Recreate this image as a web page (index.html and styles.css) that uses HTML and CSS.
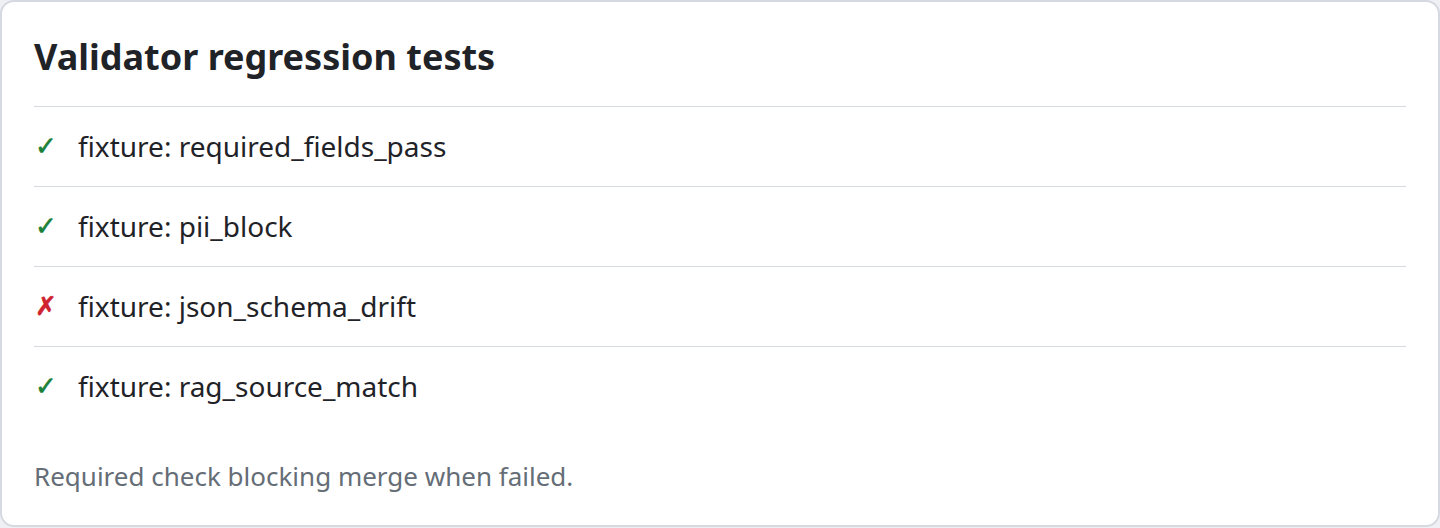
FILE: index.html
```html
<!DOCTYPE html>
<html lang="en">
<head>
    <meta charset="UTF-8">
    <meta name="viewport" content="width=device-width, initial-scale=1.0">
    <title>Validator regression tests</title>
    <link rel="stylesheet" href="styles.css">
</head>
<body>
    <div class="card">
        <h2 class="card-title">Validator regression tests</h2>
        <ul class="tests">
            <li class="test"><span class="mark pass">✓</span><span class="name">fixture: required_fields_pass</span></li>
            <li class="test"><span class="mark pass">✓</span><span class="name">fixture: pii_block</span></li>
            <li class="test"><span class="mark fail">✗</span><span class="name">fixture: json_schema_drift</span></li>
            <li class="test"><span class="mark pass">✓</span><span class="name">fixture: rag_source_match</span></li>
        </ul>
        <p class="footnote">Required check blocking merge when failed.</p>
    </div>
</body>
</html>
```
FILE: styles.css
```css
:root {
    --text-color: #1f2328;
    --muted-color: #656d76;
    --border-color: #d5dae1;
    --pass-color: #1a7f37;
    --fail-color: #cf222e;
}

body {
    margin: 0;
    background-color: #eef0f3;
    font-family: 'Noto Sans', 'Open Sans', sans-serif;
    color: var(--text-color);
}

.card {
    box-sizing: border-box;
    height: 527px;
    background-color: #ffffff;
    border: 2px solid var(--border-color);
    border-radius: 14px;
    padding: 33px 32px 0;
}

.card-title {
    margin: 0 0 27px;
    font-size: 36px;
    line-height: 44px;
    font-weight: 700;
}

.tests {
    list-style: none;
    margin: 0;
    padding: 0;
}

.test {
    display: flex;
    align-items: center;
    height: 80px;
    padding-bottom: 2px;
    box-sizing: border-box;
    border-top: 1px solid var(--border-color);
    font-size: 28px;
}

.mark {
    width: 44px;
    padding-left: 1px;
    box-sizing: border-box;
    font-family: 'DejaVu Sans', sans-serif;
    font-size: 26px;
    font-weight: 700;
    -webkit-text-stroke: 0.6px currentColor;
}

.pass {
    color: var(--pass-color);
}

.fail {
    color: var(--fail-color);
}

.footnote {
    margin: 34px 0 0;
    font-size: 26px;
    line-height: 32px;
    color: var(--muted-color);
}
```
